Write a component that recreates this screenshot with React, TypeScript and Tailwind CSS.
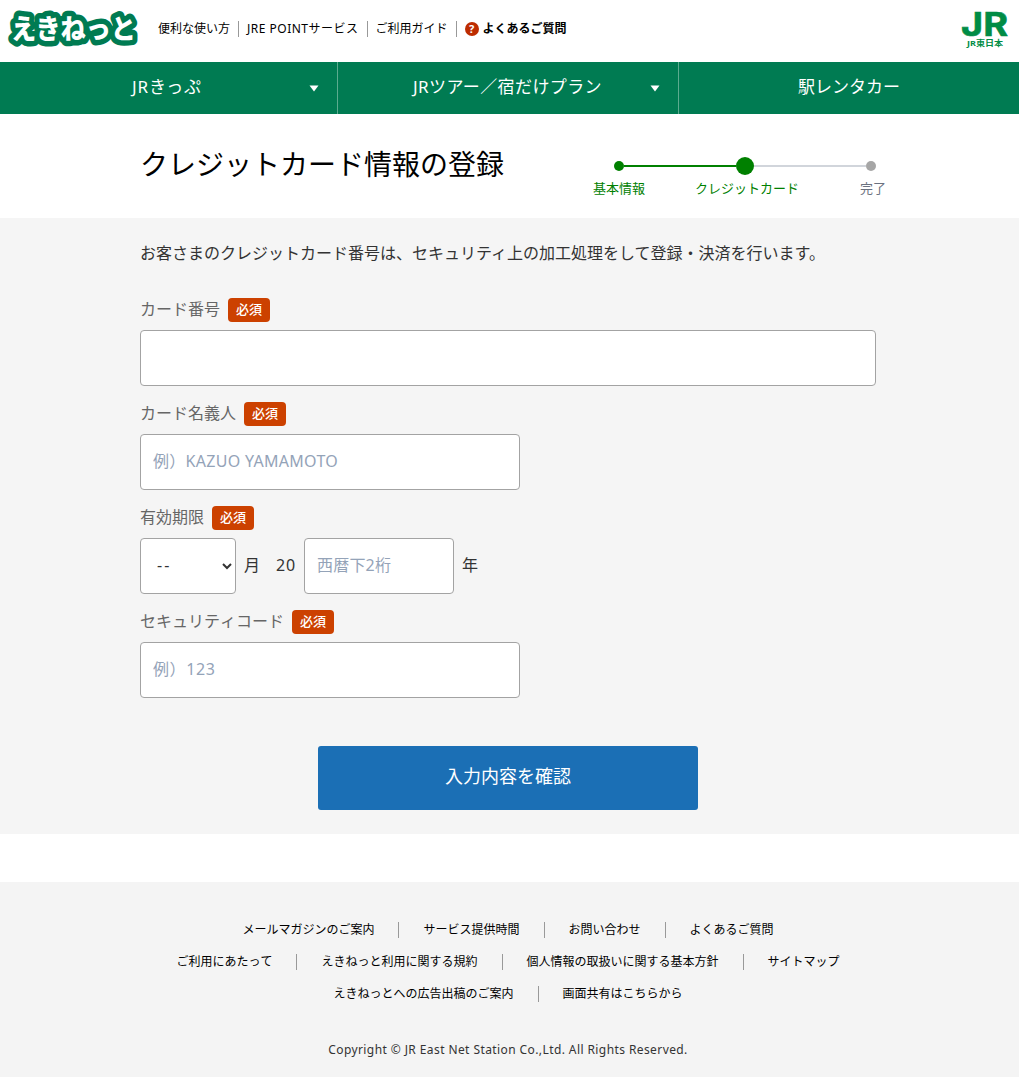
import type { ReactNode } from 'react';
import { clsx } from 'clsx';

const headerLinks = [
  { label: '便利な使い方' },
  { label: 'JRE POINTサービス', className: 'tracking-[0.5px]' },
  { label: 'ご利用ガイド' },
];

const footerRows = [
  ['メールマガジンのご案内', 'サービス提供時間', 'お問い合わせ', 'よくあるご質問'],
  ['ご利用にあたって', 'えきねっと利用に関する規約', '個人情報の取扱いに関する基本方針', 'サイトマップ'],
  ['えきねっとへの広告出稿のご案内', '画面共有はこちらから'],
];

const inputStyles =
  'block h-14 rounded border border-[#a3a3a3] bg-white px-3 pb-0.5 text-base text-[#333] placeholder:text-[#94a3b8] outline-none';

function EkinetLogo() {
  return (
    <svg width="150" height="60" viewBox="0 0 150 60" className="shrink-0 overflow-visible">
      <text
        x="11"
        y="38.5"
        fontSize="27"
        fontWeight="900"
        textLength="125"
        lengthAdjust="spacingAndGlyphs"
        fill="#fff"
        stroke="#007b52"
        strokeWidth="11"
        strokeLinejoin="round"
        paintOrder="stroke"
      >
        えきねっと
      </text>
    </svg>
  );
}

function JrLogo() {
  return (
    <svg width="58" height="60" viewBox="0 0 58 60" className="shrink-0 overflow-visible" fill="#008c45">
      <text
        x="0"
        y="36"
        fontSize="33"
        fontFamily="Inter, sans-serif"
        fontWeight="700"
        textLength="47"
        lengthAdjust="spacingAndGlyphs"
        stroke="#008c45"
        strokeWidth="0.6"
      >
        JR
      </text>
      <text x="6" y="46" fontSize="7.5" fontWeight="700" textLength="36" lengthAdjust="spacingAndGlyphs">
        JR東日本
      </text>
    </svg>
  );
}

function NavItem({ label, menu, className }: { label: string; menu?: boolean; className?: string }) {
  return (
    <a className={clsx('flex h-full items-center pb-0.5', className)}>
      <span className="flex-1 text-center">{label}</span>
      {menu && (
        <svg width="10" height="7" viewBox="0 0 10 7" className="mt-0.5 shrink-0" fill="#fff">
          <path d="M0.5 0.5h9L5 6.5z" />
        </svg>
      )}
    </a>
  );
}

function Stepper() {
  return (
    <div className="mt-[42px] w-[300px]">
      <div className="flex h-5 items-center pl-[24px]">
        <span className="size-2.5 rounded-full bg-[green]" />
        <span className="h-0.5 w-[112px] bg-[green]" />
        <span className="size-[18px] rounded-full bg-[green]" />
        <span className="h-0.5 w-[112px] bg-[#d1d5db]" />
        <span className="size-2.5 rounded-full bg-[#a6a6a6]" />
      </div>
      <div className="mt-0.5 flex text-[13px] leading-5 text-[green]">
        <span className="ml-[3px] w-[102px]">基本情報</span>
        <span className="w-[165px]">クレジットカード</span>
        <span className="text-[#6b7280]">完了</span>
      </div>
    </div>
  );
}

function Field({ label, children }: { label: string; children: ReactNode }) {
  return (
    <div className="mb-4">
      <div className="mb-2 flex h-6 items-center gap-2">
        <span className="pb-0.5 text-base leading-6 text-[#666] [font-kerning:none]">{label}</span>
        <span className="flex h-6 w-[42px] items-center justify-center rounded bg-[#cc4100] pb-px text-[13px] font-medium text-white">
          必須
        </span>
      </div>
      {children}
    </div>
  );
}

export default function App() {
  return (
    <div className="h-[1077px] overflow-hidden bg-white font-['Noto_Sans','Noto_Sans_CJK_JP',sans-serif] text-[#333]">
      <header className="flex h-[62px] items-start">
        <EkinetLogo />
        <ul className="mt-[21px] ml-2 flex text-xs leading-4 text-black">
          {headerLinks.map(({ label, className }) => (
            <li key={label} className={clsx('mr-2 border-r border-[#999] pr-2 whitespace-nowrap', className)}>
              {label}
            </li>
          ))}
          <li className="flex items-center gap-1 font-bold">
            <span className="flex size-3.5 items-center justify-center rounded-full bg-[#bd2c00] text-[11px] text-white">
              ?
            </span>
            よくあるご質問
          </li>
        </ul>
        <div className="ml-auto">
          <JrLogo />
        </div>
      </header>

      <nav className="flex h-[52px] bg-[#007b52] text-[17px] text-white">
        <NavItem
          label="JRきっぷ"
          menu
          className="w-[338px] border-r border-[#5cab8f] pr-[18px] pl-[25px] tracking-[0.9px]"
        />
        <NavItem
          label="JRツアー／宿だけプラン"
          menu
          className="w-[341px] border-r border-[#5cab8f] pr-[18px] pl-[27px] tracking-[0.4px]"
        />
        <NavItem label="駅レンタカー" className="w-[340px]" />
      </nav>

      <div className="flex h-[104px] pl-[140px]">
        <h1 className="mt-[30px] w-[450px] text-[28px] leading-10 text-black">クレジットカード情報の登録</h1>
        <Stepper />
      </div>

      <main className="h-[616px] bg-[#f5f5f5] pt-[23px] pl-[140px]">
        <p className="mb-[33px] text-base leading-6 whitespace-nowrap">
          お客さまのクレジットカード番号は、セキュリティ上の加工処理をして登録・決済を行います。
        </p>
        <Field label="カード番号">
          <input type="text" className={clsx(inputStyles, 'w-[736px]')} />
        </Field>
        <Field label="カード名義人">
          <input
            type="text"
            placeholder="例）KAZUO YAMAMOTO"
            className={clsx(inputStyles, 'w-[380px] tracking-[0.3px]')}
          />
        </Field>
        <Field label="有効期限">
          <div className="flex items-center">
            <select className={clsx(inputStyles, 'w-24 tracking-[2px]')}>
              <option>--</option>
            </select>
            <span className="ml-2 w-8 pb-0.5">月</span>
            <span className="w-7 pb-0.5 tracking-[0.8px]">20</span>
            <input type="text" placeholder="西暦下2桁" className={clsx(inputStyles, 'w-[150px] tracking-[0.2px]')} />
            <span className="ml-2 pb-0.5">年</span>
          </div>
        </Field>
        <Field label="セキュリティコード">
          <input type="text" placeholder="例）123" className={clsx(inputStyles, 'w-[380px] tracking-[0.6px]')} />
        </Field>
        <button className="mt-8 ml-[178px] h-16 w-[380px] rounded-[3px] bg-[#1b6fb5] pb-1 text-lg text-white">
          入力内容を確認
        </button>
      </main>

      <footer className="mt-12 h-[195px] bg-[#f4f4f4] pt-10 pr-[3px] text-xs text-black">
        {footerRows.map((row) => (
          <ul key={row[0]} className="mb-4 flex h-4 justify-center leading-4 [font-kerning:none]">
            {row.map((item) => (
              <li key={item} className="border-r border-[#999] px-6 last:border-r-0">
                {item}
              </li>
            ))}
          </ul>
        ))}
        <p className="mt-10 text-center leading-4 tracking-[0.41px] text-[#333]">
          Copyright © JR East Net Station Co.,Ltd. All Rights Reserved.
        </p>
      </footer>
    </div>
  );
}
